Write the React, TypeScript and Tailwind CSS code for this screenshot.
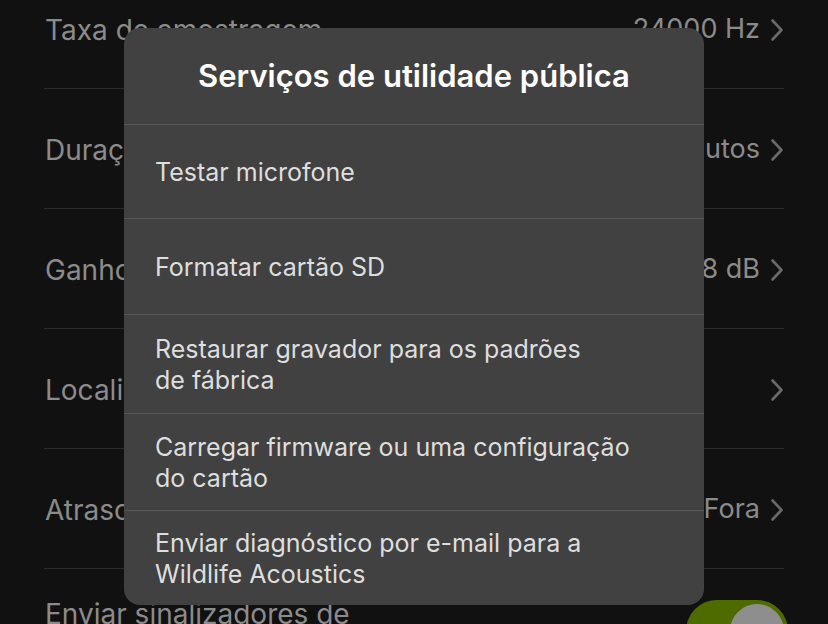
import React from "react";

function Chevron() {
  return (
    <svg width="14" height="24" viewBox="0 0 14 24" className="shrink-0">
      <path d="M2.5 2.5 L11.5 12 L2.5 21.5" fill="none" stroke="#6a6a6a" strokeWidth="2.6" strokeLinecap="round" strokeLinejoin="round" />
    </svg>
  );
}

const rows = [
  { label: "Taxa de amostragem", value: "24000 Hz" },
  { label: "Duração da gravação", value: "5 minutos" },
  { label: "Ganho", value: "18 dB" },
  { label: "Localização", value: "" },
  { label: "Atraso de início", value: "Fora" },
];

const items: { lines: string[]; h: string }[] = [
  { lines: ["Testar microfone"], h: "h-[94px]" },
  { lines: ["Formatar cartão SD"], h: "h-[96px]" },
  { lines: ["Restaurar gravador para os padrões", "de fábrica"], h: "h-[99px]" },
  { lines: ["Carregar firmware ou uma configuração", "do cartão"], h: "h-[97px]" },
  { lines: ["Enviar diagnóstico por e-mail para a", "Wildlife Acoustics"], h: "h-[94px]" },
];

export default function App() {
  return (
    <div
      className="relative w-[828px] h-[624px] overflow-hidden bg-[#111111]"
      style={{ fontFamily: "Inter, 'Noto Sans', sans-serif" }}
    >
      <div className="mt-[-31px] ml-[44px] mr-[44px] flex flex-col">
        {rows.map((r) => (
          <div key={r.label} className="h-[120px] flex items-center justify-between border-b border-[#2c2c2c]">
            <span className="text-[28px] text-[#8b8b8b] ml-[1px] mt-[2px]">{r.label}</span>
            <div className="flex items-center gap-[10px] mt-[2px]">
              {r.value && <span className="text-[27px] text-[#8b8b8b]">{r.value}</span>}
              <Chevron />
            </div>
          </div>
        ))}
        <div className="h-[124px] flex items-center justify-between">
          <span className="text-[28px] leading-[34px] text-[#8b8b8b] ml-[1px] w-[420px]">
            Enviar sinalizadores de localização
          </span>
          <div className="w-[102px] h-[62px] rounded-full bg-[#4e6b00] flex items-center justify-end pr-[4px] mr-[-4px]">
            <div className="w-[54px] h-[54px] rounded-full bg-[#8e8e8e]" />
          </div>
        </div>
      </div>

      <div className="absolute left-[124px] top-[28px] w-[580px] rounded-[16px] bg-[#414141] flex flex-col overflow-hidden">
        <div className="h-[97px] flex items-center justify-center border-b border-[#585858]">
          <span className="text-[31px] font-semibold text-white">Serviços de utilidade pública</span>
        </div>
        {items.map((it, i) => (
          <div
            key={it.lines[0]}
            className={`${it.h} flex flex-col justify-center pl-[31px] pr-[20px] pt-[2px] ${i < items.length - 1 ? "border-b border-[#585858]" : ""}`}
          >
            {it.lines.map((l) => (
              <span key={l} className="text-[25px] leading-[31px] text-[#dedede] whitespace-nowrap">{l}</span>
            ))}
          </div>
        ))}
      </div>
    </div>
  );
}
